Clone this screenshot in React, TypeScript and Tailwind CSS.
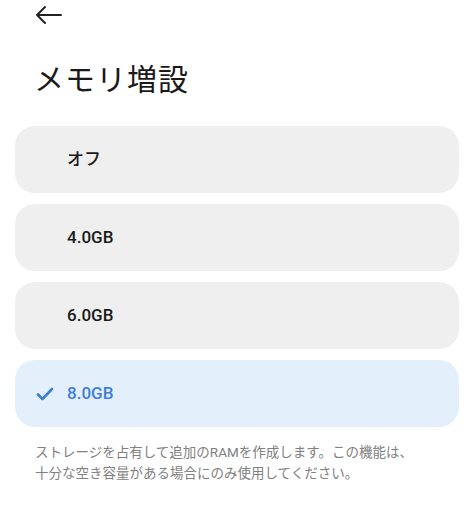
import React from 'react';

const options = [
  { id: 'off', label: 'オフ' },
  { id: '4', label: '4.0GB' },
  { id: '6', label: '6.0GB' },
  { id: '8', label: '8.0GB' },
];

const selected = '8';

export default function App() {
  return (
    <div
      className="w-[474px] h-[513px] bg-white overflow-hidden"
      style={{ fontFamily: '"Roboto", "Noto Sans CJK JP", sans-serif' }}
    >
      <div className="pl-[35px] pt-[5px] h-[30px]">
        <svg width="28" height="20" viewBox="0 0 28 20" fill="none" stroke="#222" strokeWidth="2" strokeLinecap="round" strokeLinejoin="round">
          <path d="M2 10h24M10 2L2 10l8 8" />
        </svg>
      </div>
      <h1 className="pl-[34px] mt-[31px] text-[30px] leading-[37px] text-[#1a1a1a] font-normal tracking-[1px]">
        メモリ増設
      </h1>
      <div className="mt-[28px] px-[15px] flex flex-col gap-[11px]">
        {options.map((o) => {
          const active = o.id === selected;
          return (
            <div
              key={o.id}
              className={
                active
                  ? 'h-[67px] rounded-[20px] bg-[#e4effc] flex items-center pl-[21px]'
                  : 'h-[67px] rounded-[20px] bg-[#efefef] flex items-center pl-[21px]'
              }
            >
              <div className="w-[31px] flex items-center">
                {active && (
                  <svg width="18" height="14" viewBox="0 0 18 14" fill="none" stroke="#3b7ddd" strokeWidth="2.6" strokeLinecap="round" strokeLinejoin="round">
                    <path d="M2 7.5l4.5 4.5L16 2" />
                  </svg>
                )}
              </div>
              <span
                className={
                  active
                    ? 'text-[17px] font-medium text-[#3b7ddd]'
                    : 'text-[17px] font-medium text-[#1a1a1a]'
                }
              >
                {o.label}
              </span>
            </div>
          );
        })}
      </div>
      <p className="mt-[15px] pl-[35px] pr-[20px] text-[13.5px] leading-[21px] text-[#808080]">
        ストレージを占有して追加のRAMを作成します。この機能は、
        <br />
        十分な空き容量がある場合にのみ使用してください。
      </p>
    </div>
  );
}
